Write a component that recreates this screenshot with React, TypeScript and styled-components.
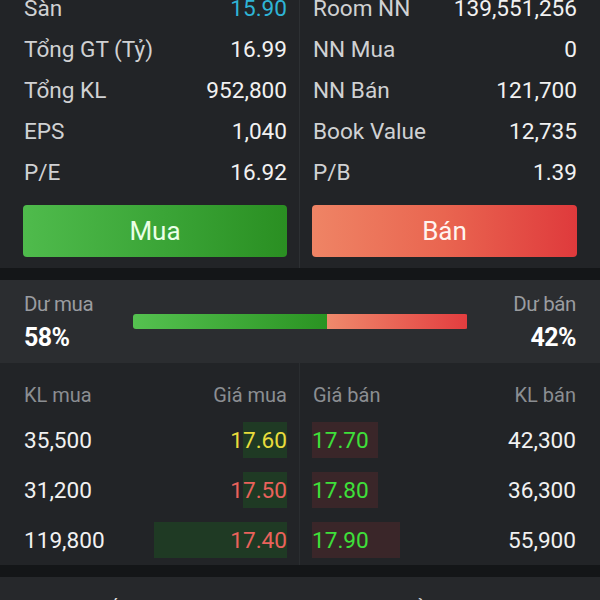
import React from "react";
import styled, { createGlobalStyle } from "styled-components";

const GlobalStyle = createGlobalStyle`
  html, body {
    margin: 0;
    padding: 0;
    background: #141618;
    overflow: hidden;
  }
  body {
    font-family: Roboto, "Noto Sans", "Liberation Sans", sans-serif;
    -webkit-font-smoothing: antialiased;
  }
`;

const Page = styled.div`
  width: 600px;
  display: flex;
  flex-direction: column;
  gap: 12px;
  margin-top: -12px;
`;

const MarketGroup = styled.div`
  display: flex;
  flex-direction: column;
`;

const StatsPanel = styled.section`
  background: #222427;
  display: grid;
  grid-template-columns: 300px 300px;
`;

const StatsColumn = styled.div<{ $side: "left" | "right" }>`
  display: flex;
  flex-direction: column;
  padding: ${(p) => (p.$side === "left" ? "0 12px 11px 23px" : "0 23px 11px 12px")};
  border-right: ${(p) => (p.$side === "left" ? "1px solid #2d3033" : "none")};
`;

const StatRow = styled.div`
  height: 41px;
  display: flex;
  align-items: center;
  justify-content: space-between;
  padding: 0 0 0 1px;
  font-size: 22.6px;
`;

const StatLabel = styled.span`
  color: #d0d1d3;
`;

const StatValue = styled.span<{ $color?: string }>`
  color: ${(p) => p.$color || "#f1f1f1"};
`;

const TradeButton = styled.button<{ $kind: "buy" | "sell" }>`
  margin-top: 12px;
  height: 52px;
  border: none;
  border-radius: 4px;
  font-family: inherit;
  font-size: 26px;
  color: ${(p) => (p.$kind === "buy" ? "#eaffe6" : "#fff4f0")};
  background: ${(p) =>
    p.$kind === "buy"
      ? "linear-gradient(90deg, #4fbb4c 0%, #3aa436 55%, #2a8f22 100%)"
      : "linear-gradient(90deg, #ef8465 0%, #e96550 50%, #df3a3c 100%)"};
`;

const DepthPanel = styled.section`
  background: #2b2d30;
  height: 83px;
  box-sizing: border-box;
  padding: 12px 24px 0 24px;
  display: grid;
  grid-template-columns: 1fr 335px 1fr;
  align-items: start;
`;

const DepthBlock = styled.div<{ $align: "left" | "right" }>`
  display: flex;
  flex-direction: column;
  align-items: ${(p) => (p.$align === "left" ? "flex-start" : "flex-end")};
`;

const DepthLabel = styled.span`
  color: #9a9ca0;
  font-size: 20.5px;
  line-height: 24px;
  letter-spacing: -0.4px;
`;

const DepthPercent = styled.span`
  color: #ffffff;
  font-size: 25px;
  font-weight: 700;
  line-height: 30px;
  margin-top: 7px;
  letter-spacing: -0.6px;
`;

const DepthBar = styled.div`
  margin-top: 22px;
  height: 15px;
  display: flex;
  border-radius: 3px;
  overflow: hidden;
`;

const DepthFill = styled.div<{ $kind: "buy" | "sell" }>`
  height: 100%;
  background: ${(p) =>
    p.$kind === "buy"
      ? "linear-gradient(90deg, #55c250 0%, #2a9322 100%)"
      : "linear-gradient(90deg, #ef8a6c 0%, #e33d3f 100%)"};
`;

const BookPanel = styled.section`
  background: #222427;
  height: 202px;
  display: grid;
  grid-template-columns: 300px 300px;
  overflow: hidden;
`;

const BookSide = styled.div<{ $side: "left" | "right" }>`
  display: flex;
  flex-direction: column;
  padding-top: 12px;
  border-right: ${(p) => (p.$side === "left" ? "1px solid #2a2d30" : "none")};
`;

const BookHeader = styled.div<{ $side: "left" | "right" }>`
  height: 40px;
  display: flex;
  align-items: center;
  justify-content: space-between;
  padding: ${(p) => (p.$side === "left" ? "0 12px 0 24px" : "0 24px 0 13px")};
  color: #8b8e92;
  font-size: 20px;
`;

const BookRow = styled.div<{ $side: "left" | "right" }>`
  height: 50px;
  display: flex;
  align-items: center;
  justify-content: space-between;
  padding: ${(p) => (p.$side === "left" ? "0 12px 0 24px" : "0 24px 0 12px")};
  font-size: 22.6px;
`;

const Volume = styled.span`
  color: #f1f1f1;
`;

const PriceCell = styled.span<{ $side: "left" | "right" }>`
  position: relative;
  height: 36px;
  display: flex;
  align-items: center;
  justify-content: ${(p) => (p.$side === "left" ? "flex-end" : "flex-start")};
  min-width: 60px;
`;

const PriceBar = styled.span<{ $side: "left" | "right" }>`
  position: absolute;
  top: 0;
  bottom: 0;
  ${(p) => (p.$side === "left" ? "right: 0;" : "left: 0;")}
  background: ${(p) => (p.$side === "left" ? "#1f3a24" : "#3a2629")};
`;

const PriceText = styled.span<{ $color: string }>`
  position: relative;
  color: ${(p) => p.$color};
`;

const FooterPanel = styled.section`
  background: #26282b;
  height: 60px;
  display: flex;
  justify-content: space-around;
  padding-top: 19px;
  box-sizing: border-box;
  font-size: 20px;
  color: #e0e0e0;
`;

const stats = [
  { l: "Sàn", v: "15.90", c: "#2fb4d6", rl: "Room NN", rv: "139,551,256" },
  { l: "Tổng GT (Tỷ)", v: "16.99", rl: "NN Mua", rv: "0" },
  { l: "Tổng KL", v: "952,800", rl: "NN Bán", rv: "121,700" },
  { l: "EPS", v: "1,040", rl: "Book Value", rv: "12,735" },
  { l: "P/E", v: "16.92", rl: "P/B", rv: "1.39" },
];

const YELLOW = "#e9dc3c";
const RED = "#ea625c";
const GREEN = "#3ee03a";

const bids = [
  { vol: "35,500", price: "17.60", color: YELLOW, bar: 44 },
  { vol: "31,200", price: "17.50", color: RED, bar: 44 },
  { vol: "119,800", price: "17.40", color: RED, bar: 133 },
];

const asks = [
  { vol: "42,300", price: "17.70", color: GREEN, bar: 66 },
  { vol: "36,300", price: "17.80", color: GREEN, bar: 66 },
  { vol: "55,900", price: "17.90", color: GREEN, bar: 88 },
];

export default function App() {
  const buyPct = 58;
  return (
    <>
      <GlobalStyle />
      <Page>
        <StatsPanel>
          <StatsColumn $side="left">
            {stats.map((s) => (
              <StatRow key={s.l}>
                <StatLabel>{s.l}</StatLabel>
                <StatValue $color={s.c}>{s.v}</StatValue>
              </StatRow>
            ))}
            <TradeButton $kind="buy">Mua</TradeButton>
          </StatsColumn>
          <StatsColumn $side="right">
            {stats.map((s) => (
              <StatRow key={s.rl}>
                <StatLabel>{s.rl}</StatLabel>
                <StatValue>{s.rv}</StatValue>
              </StatRow>
            ))}
            <TradeButton $kind="sell">Bán</TradeButton>
          </StatsColumn>
        </StatsPanel>

        <MarketGroup>
          <DepthPanel>
            <DepthBlock $align="left">
              <DepthLabel>Dư mua</DepthLabel>
              <DepthPercent>{buyPct}%</DepthPercent>
            </DepthBlock>
            <DepthBar>
              <DepthFill $kind="buy" style={{ width: `${buyPct}%` }} />
              <DepthFill $kind="sell" style={{ width: `${100 - buyPct}%` }} />
            </DepthBar>
            <DepthBlock $align="right">
              <DepthLabel>Dư bán</DepthLabel>
              <DepthPercent>{100 - buyPct}%</DepthPercent>
            </DepthBlock>
          </DepthPanel>

          <BookPanel>
            <BookSide $side="left">
              <BookHeader $side="left">
                <span>KL mua</span>
                <span>Giá mua</span>
              </BookHeader>
              {bids.map((b) => (
                <BookRow $side="left" key={b.price}>
                  <Volume>{b.vol}</Volume>
                  <PriceCell $side="left">
                    <PriceBar $side="left" style={{ width: b.bar }} />
                    <PriceText $color={b.color}>{b.price}</PriceText>
                  </PriceCell>
                </BookRow>
              ))}
            </BookSide>
            <BookSide $side="right">
              <BookHeader $side="right">
                <span>Giá bán</span>
                <span>KL bán</span>
              </BookHeader>
              {asks.map((a) => (
                <BookRow $side="right" key={a.price}>
                  <PriceCell $side="right">
                    <PriceBar $side="right" style={{ width: a.bar }} />
                    <PriceText $color={a.color}>{a.price}</PriceText>
                  </PriceCell>
                  <Volume>{a.vol}</Volume>
                </BookRow>
              ))}
            </BookSide>
          </BookPanel>
        </MarketGroup>

        <FooterPanel>
          <span>Thống kê giá</span>
          <span>Lịch sử khớp lệnh</span>
        </FooterPanel>
      </Page>
    </>
  );
}
